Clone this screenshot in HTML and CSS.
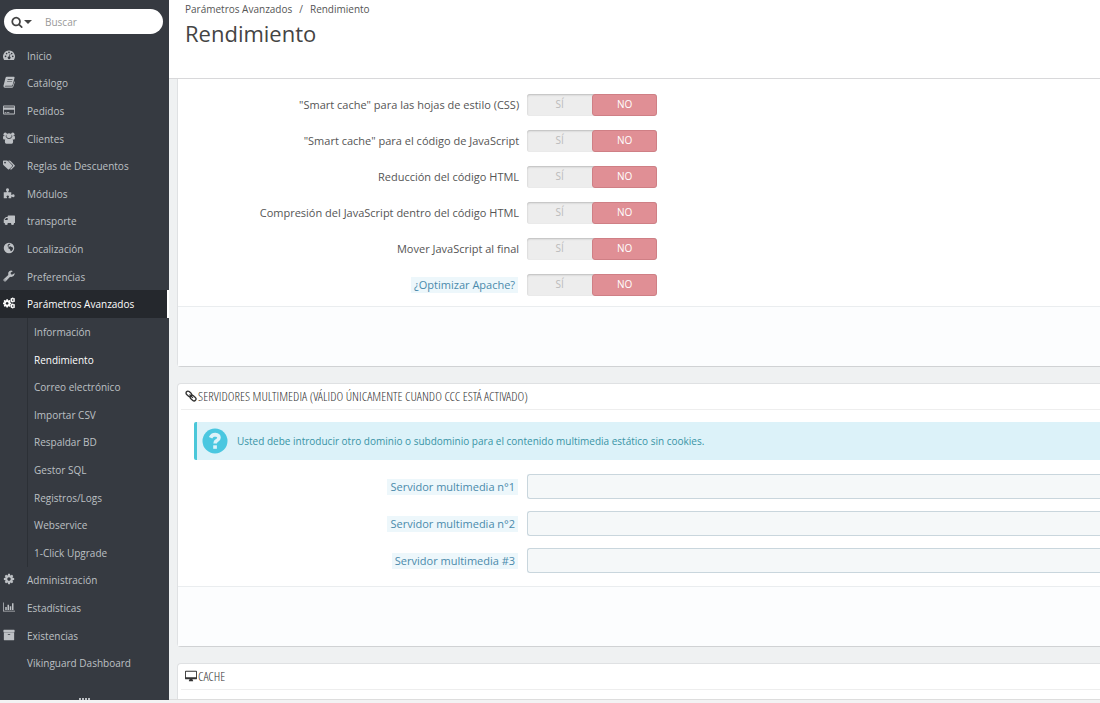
FILE: index.html
```
<!DOCTYPE html>
<html lang="es">

<head>
    <meta charset="utf-8">
    <title>Rendimiento</title>
    <link rel="stylesheet" href="styles.css">
</head>

<body>
    <svg class="sprite" aria-hidden="true">
        <symbol id="i-search" viewBox="0 0 1792 1792"><path d="M1216 832q0-185-131.5-316.5t-316.5-131.5-316.5 131.5-131.5 316.5 131.5 316.5 316.5 131.5 316.5-131.5 131.5-316.5zm512 832q0 52-38 90t-90 38q-54 0-90-38l-343-342q-179 124-399 124-143 0-273.5-55.5t-225-150-150-225-55.5-273.5 55.5-273.5 150-225 225-150 273.5-55.5 273.5 55.5 225 150 150 225 55.5 273.5q0 220-124 399l343 343q37 37 37 90z"/></symbol>
        <symbol id="i-dashboard" viewBox="0 0 16 16"><path fill-rule="evenodd" d="M8 2a8 8 0 0 0-6.7 12.3q.2.3.6.3h12.2q.4 0 .6-.3A8 8 0 0 0 8 2zM3.4 8.8a1.1 1.1 0 1 1 0 2.2 1.1 1.1 0 0 1 0-2.2zM4.8 5a1.1 1.1 0 1 1 0 2.2 1.1 1.1 0 0 1 0-2.2zM8 3.4a1.1 1.1 0 1 1 0 2.2 1.1 1.1 0 0 1 0-2.2zM11.6 5a1.1 1.1 0 1 1 0 2.2 1.1 1.1 0 0 1 0-2.2zM13 8.8a1.1 1.1 0 1 1 0 2.2 1.1 1.1 0 0 1 0-2.2zM9 6.4l1 .3-1 3.4a1.8 1.8 0 1 1-1-.2z"/></symbol>
        <symbol id="i-book" viewBox="0 0 16 16"><path fill-rule="evenodd" d="M5 1h9.5q1.200.2.9 1.400L12.800 12q-.3 1-1.400 1H3.200q-.9 0-.9.6.1.5.9.5h9q.7 0 .9-.7l2-6.500q.9.500.6 1.500l-2 6q-.4 1.400-1.800 1.400H3Q.8 15.600.6 13.500q0-.8.3-1.500L3.400 2.400Q3.900 1 5 1zM6.300 4l-.3.9h6.500l.3-.9zM5.600 6.500l-.3.9h6.500l.3-.9z"/></symbol>
        <symbol id="i-card" viewBox="0 0 16 16"><path fill-rule="evenodd" d="M1.300 2h13.400Q16 2 16 3.300v9.400q0 1.300-1.300 1.300H1.300Q0 14 0 12.700V3.300Q0 2 1.300 2zM1.100 3.200v1.600h13.800V3.200zM1.100 7.800v5h13.800v-5zM2.200 10.800h2.200v1H2.200zM5.200 10.800h3.300v1H5.200z"/></symbol>
        <symbol id="i-group" viewBox="0 0 16 16"><circle cx="3" cy="3" r="2.300"/><circle cx="13" cy="3" r="2.300"/><circle cx="8" cy="5" r="3.200"/><path d="M.9 5q2 1 3.700.2Q4.200 8 5.200 8.500 3.500 8.700 3 10H1.500Q0 10 0 8q0-2.300.9-3zM15.100 5q-2 1-3.700.2.4 2.800-.6 3.300 1.700.2 2.200 1.500h1.500Q16 10 16 8q0-2.300-.9-3zM5.200 8.300q2.800 1.900 5.600 0Q13.500 8.500 13.500 13q0 2.500-2 2.500h-7q-2 0-2-2.500 0-4.500 2.700-4.700z"/></symbol>
        <symbol id="i-tags" viewBox="0 0 16 16"><path fill-rule="evenodd" d="M0 2.800Q0 2 .8 2h4.300q.9 0 1.700.7l5.400 5.500q.8.800 0 1.600l-4 4q-.8.700-1.600 0L.8 8.200Q0 7.500 0 6.600zM2.700 3.500a1.200 1.200 0 1 0 0 2.400 1.200 1.200 0 0 0 0-2.400z"/><path d="M7 2h1.400q.9 0 1.700.7l5.400 5.500q.8.800 0 1.600l-4 4q-.9.800-1.700 0l-.4-.4 3.700-3.700q.8-.9 0-1.700z"/></symbol>
        <symbol id="i-puzzle" viewBox="0 0 16 16"><path d="M1 7h3.500Q5.200 7 5 6 3.600 4.700 4 3.200 4.500 1.800 6 1.800t2 1.400Q8.400 4.700 7 6q-.2 1 .6 1H11v3q0 .8.800.6.8-1.200 2.200-1 1.500.4 1.500 2t-1.500 2q-1.400.2-2.200-1-.8-.2-.8.600V15H7.600q-.6-.4-.2-1.200.8-.8.500-1.600-.4-1-1.600-1t-1.600 1q-.3.8.500 1.600.4.800-.2 1.200H1z"/></symbol>
        <symbol id="i-truck" viewBox="0 0 16 16"><path fill-rule="evenodd" d="M7 2h8.300q.7 0 .7.700v9.300h-1.400a2 2 0 1 1-3.800 0H6.200a2 2 0 1 1-3.800 0H1V7.400q0-.5.4-.9L3.600 4.300Q4 4 4.500 4h1.700V2.700Q6.200 2 7 2zM4.500 5.200L2.200 7.500v.6h4V5.200z"/></symbol>
        <symbol id="i-globe" viewBox="0 0 16 16"><path fill-rule="evenodd" d="M8 1a7 7 0 1 0 0 14A7 7 0 0 0 8 1zM8 2.300l1.800.3q-.4 1-1.600 1.400L7 5.200l1.500 1 1.500-.7 1.500 1.200 2 .8q0 2.500-2 4.500l-1.300.4-.7-2.400L7.800 8.500 6.500 8 8 6.800 6 5.800 6.500 3.500z"/></symbol>
        <symbol id="i-wrench" viewBox="0 0 16 16"><path fill-rule="evenodd" d="M15.300 4.300q.5.300.3 1Q14.800 9 11.200 9.200q-.9 0-1.700-.3L3.700 15q-1 .9-2 0l-.8-.8q-.9-1 0-2L7 6.500q-.8-3 1.300-4.800 2.200-1.600 4.300-.5.500.3 0 .7L10.300 3.300v2L12 6.300zM2.600 12.500a.7.7 0 1 0 0 1.400.7.7 0 0 0 0-1.400z"/></symbol>
        <symbol id="i-cog" viewBox="0 0 1792 1792"><path d="M1152 896q0-106-75-181t-181-75-181 75-75 181 75 181 181 75 181-75 75-181zm512-109v222q0 12-8 23t-20 13l-185 28q-19 54-39 91 35 50 107 138 10 12 10 25t-9 23q-27 37-99 108t-94 71q-12 0-26-9l-138-108q-44 23-91 38-16 136-29 186-7 28-36 28h-222q-14 0-24.500-8.500t-11.500-21.500l-28-184q-49-16-90-37l-141 107q-10 9-25 9-14 0-25-11-126-114-165-168-7-10-7-23 0-12 8-23 15-21 51-66.500t54-70.500q-27-50-41-99l-183-27q-13-2-21-12.500t-8-23.500v-222q0-12 8-23t19-13l186-28q14-46 39-92-40-57-107-138-10-12-10-24 0-10 9-23 26-36 98.500-107.500t94.500-71.500q13 0 26 10l138 107q44-23 91-38 16-136 29-186 7-28 36-28h222q14 0 24.500 8.500t11.500 21.500l28 184q49 16 90 37l142-107q9-9 24-9 13 0 25 10 129 119 165 170 7 8 7 22 0 12-8 23-15 21-51 66.500t-54 70.500q26 50 41 98l183 28q13 2 21 12.500t8 23.500z"/></symbol>
        <symbol id="i-cogs" viewBox="0 0 16 16"><use href="#i-cog" x="-1" y="2" width="13" height="13"/><use href="#i-cog" x="9" y="0" width="8" height="8"/><use href="#i-cog" x="9" y="8" width="8" height="8"/></symbol>
        <symbol id="i-chart" viewBox="0 0 16 16"><path d="M0 2h1v11h15v1H0zM3 8h2v4H3zM6 5h2v7H6zM9 7h2v5H9zM12 3h2v9h-2z"/></symbol>
        <symbol id="i-archive" viewBox="0 0 1792 1792"><path d="M1088 832q0-26-19-45t-45-19h-256q-26 0-45 19t-19 45 19 45 45 19h256q26 0 45-19t19-45zm576-192v960q0 26-19 45t-45 19h-1408q-26 0-45-19t-19-45v-960q0-26 19-45t45-19h1408q26 0 45 19t19 45zm64-448v256q0 26-19 45t-45 19h-1536q-26 0-45-19t-19-45v-256q0-26 19-45t45-19h1536q26 0 45 19t19 45z"/></symbol>
        <symbol id="i-link" viewBox="0 0 16 16"><g fill="none" stroke="currentColor" stroke-width="1.800"><rect x="1" y="2.500" width="8.500" height="5" rx="2.500" transform="rotate(42 5 5)"/><rect x="6.500" y="8.500" width="8.500" height="5" rx="2.500" transform="rotate(42 11 11)"/><path d="M6 6l4.500 4.500"/></g></symbol>
        <symbol id="i-desktop" viewBox="0 0 16 16"><path fill-rule="evenodd" d="M1.200 1h13.600Q16 1 16 2.200v9q0 1.200-1.200 1.200H10q0 1.200.8 1.600v1H5.200v-1q.8-.4.8-1.600H1.200Q0 12.400 0 11.200v-9Q0 1 1.200 1zM1.200 2.200v7.400h13.600V2.200z"/></symbol>
        <symbol id="i-question" viewBox="0 0 26 26"><circle cx="13" cy="13" r="12.500"/><path fill="none" stroke="#dcf2f9" stroke-width="3.600" d="M8.600 9.800q1.300-3.200 4.600-3.200 3.800.2 3.800 3.200 0 1.700-2.200 2.900-1.700.9-1.700 2.900"/><path fill="#dcf2f9" d="M11.200 17.300h3.700v3.500h-3.700z"/></symbol>
    </svg>

    <div class="page">
        <aside class="sidebar">
            <form class="search">
                <button type="button" aria-label="Buscar en"><svg class="icon"><use href="#i-search"/></svg><span class="caret"></span></button>
                <input type="text" placeholder="Buscar" aria-label="Buscar">
            </form>
            <nav class="menu">
                <a href="#"><svg class="icon"><use href="#i-dashboard"/></svg>Inicio</a>
                <a href="#"><svg class="icon"><use href="#i-book"/></svg>Catálogo</a>
                <a href="#"><svg class="icon"><use href="#i-card"/></svg>Pedidos</a>
                <a href="#"><svg class="icon"><use href="#i-group"/></svg>Clientes</a>
                <a href="#"><svg class="icon"><use href="#i-tags"/></svg>Reglas de Descuentos</a>
                <a href="#"><svg class="icon"><use href="#i-puzzle"/></svg>Módulos</a>
                <a href="#"><svg class="icon"><use href="#i-truck"/></svg>transporte</a>
                <a href="#"><svg class="icon"><use href="#i-globe"/></svg>Localización</a>
                <a href="#"><svg class="icon"><use href="#i-wrench"/></svg>Preferencias</a>
                <a href="#" class="active"><svg class="icon"><use href="#i-cogs"/></svg>Parámetros Avanzados</a>
                <div class="submenu">
                    <a href="#">Información</a>
                    <a href="#" class="current">Rendimiento</a>
                    <a href="#">Correo electrónico</a>
                    <a href="#">Importar CSV</a>
                    <a href="#">Respaldar BD</a>
                    <a href="#">Gestor SQL</a>
                    <a href="#">Registros/Logs</a>
                    <a href="#">Webservice</a>
                    <a href="#">1-Click Upgrade</a>
                </div>
                <a href="#"><svg class="icon"><use href="#i-cog"/></svg>Administración</a>
                <a href="#"><svg class="icon"><use href="#i-chart"/></svg>Estadísticas</a>
                <a href="#"><svg class="icon"><use href="#i-archive"/></svg>Existencias</a>
                <a href="#"><span class="icon"></span>Vikinguard Dashboard</a>
            </nav>
            <div class="grip"><i></i><i></i><i></i><i></i></div>
        </aside>

        <main class="content">
            <header class="page-head">
                <div class="breadcrumb"><a href="#">Parámetros Avanzados</a><span>/</span><a href="#">Rendimiento</a></div>
                <h1>Rendimiento</h1>
            </header>

            <section class="panel panel-first">
                <div class="rows">
                    <div class="row" role="radiogroup" aria-labelledby="l1">
                        <span class="label" id="l1">"Smart cache" para las hojas de estilo (CSS)</span>
                        <div class="switch">
                            <input type="radio" name="css" id="css_on"><label for="css_on">SÍ</label>
                            <input type="radio" name="css" id="css_off" checked><label for="css_off">NO</label>
                        </div>
                    </div>
                    <div class="row" role="radiogroup" aria-labelledby="l2">
                        <span class="label" id="l2">"Smart cache" para el código de JavaScript</span>
                        <div class="switch">
                            <input type="radio" name="js" id="js_on"><label for="js_on">SÍ</label>
                            <input type="radio" name="js" id="js_off" checked><label for="js_off">NO</label>
                        </div>
                    </div>
                    <div class="row" role="radiogroup" aria-labelledby="l3">
                        <span class="label" id="l3">Reducción del código HTML</span>
                        <div class="switch">
                            <input type="radio" name="html" id="html_on"><label for="html_on">SÍ</label>
                            <input type="radio" name="html" id="html_off" checked><label for="html_off">NO</label>
                        </div>
                    </div>
                    <div class="row" role="radiogroup" aria-labelledby="l4">
                        <span class="label" id="l4">Compresión del JavaScript dentro del código HTML</span>
                        <div class="switch">
                            <input type="radio" name="inline" id="inline_on"><label for="inline_on">SÍ</label>
                            <input type="radio" name="inline" id="inline_off" checked><label for="inline_off">NO</label>
                        </div>
                    </div>
                    <div class="row" role="radiogroup" aria-labelledby="l5">
                        <span class="label" id="l5">Mover JavaScript al final</span>
                        <div class="switch">
                            <input type="radio" name="defer" id="defer_on"><label for="defer_on">SÍ</label>
                            <input type="radio" name="defer" id="defer_off" checked><label for="defer_off">NO</label>
                        </div>
                    </div>
                    <div class="row" role="radiogroup" aria-labelledby="l6">
                        <span class="label help" id="l6">¿Optimizar Apache?</span>
                        <div class="switch">
                            <input type="radio" name="apache" id="apache_on"><label for="apache_on">SÍ</label>
                            <input type="radio" name="apache" id="apache_off" checked><label for="apache_off">NO</label>
                        </div>
                    </div>
                </div>
                <div class="panel-footer"></div>
            </section>

            <section class="panel">
                <h2><svg class="icon"><use href="#i-link"/></svg>SERVIDORES MULTIMEDIA (VÁLIDO ÚNICAMENTE CUANDO CCC ESTÁ ACTIVADO)</h2>
                <div class="alert"><svg><use href="#i-question"/></svg>Usted debe introducir otro dominio o subdominio para el contenido multimedia estático sin cookies.</div>
                <div class="rows rows-text">
                    <div class="row">
                        <label class="label help" for="server1">Servidor multimedia n°1</label>
                        <input type="text" id="server1">
                    </div>
                    <div class="row">
                        <label class="label help" for="server2">Servidor multimedia n°2</label>
                        <input type="text" id="server2">
                    </div>
                    <div class="row">
                        <label class="label help" for="server3">Servidor multimedia #3</label>
                        <input type="text" id="server3">
                    </div>
                </div>
                <div class="panel-footer"></div>
            </section>

            <section class="panel panel-last">
                <h2><svg class="icon"><use href="#i-desktop"/></svg>CACHE</h2>
            </section>
        </main>
    </div>
</body>

</html>
```
FILE: styles.css
```
* {
    box-sizing: border-box;
}

body {
    margin: 0;
    font-family: "Open Sans", sans-serif;
    font-size: 10px;
    line-height: 16px;
    color: #555;
    background: #f3f3f4;
}

a {
    color: inherit;
    text-decoration: none;
}

input,
button {
    font: inherit;
    color: inherit;
}

.sprite {
    position: absolute;
    width: 0;
    height: 0;
}

.icon {
    flex: none;
    width: 12px;
    height: 12px;
    fill: currentColor;
}

.page {
    display: flex;
    height: 100vh;
    padding-bottom: 3px;
}

/* sidebar */
.sidebar {
    display: flex;
    flex-direction: column;
    flex: none;
    width: 169px;
    padding-top: 9px;
    background: #363a41;
    color: #bdc0c4;
}

.search {
    display: flex;
    align-items: center;
    height: 25px;
    margin: 0 6px 8px 4px;
    background: #fff;
    border-radius: 13px;
}

.search button {
    display: flex;
    align-items: center;
    gap: 1px;
    padding: 0 0 0 7px;
    border: 0;
    background: none;
    color: #444;
}

.caret {
    border: 4px solid transparent;
    border-top-color: currentColor;
    border-bottom: 0;
}

.search input {
    flex: 1;
    min-width: 0;
    padding: 0 13px;
    border: 0;
    background: none;
}

.search input::placeholder {
    color: #999;
}

.menu,
.submenu {
    display: flex;
    flex-direction: column;
}

.menu {
    flex: 1;
}

.menu a {
    display: flex;
    flex: 1 0 0;
    align-items: center;
    gap: 12px;
    padding-left: 3px;
}

.menu .icon {
    margin-bottom: 2px;
}

.menu .active {
    background: #25282d;
    border-right: 2px solid #fff;
    color: #fff;
}

.submenu {
    flex: 9 0 0;
    margin-left: 27px;
    border-left: 1px solid #2c3036;
}

.submenu a {
    padding-left: 6px;
}

.submenu .current {
    color: #fff;
}

.grip {
    display: flex;
    justify-content: center;
    align-items: flex-end;
    gap: 1px;
    height: 23px;
}

.grip i {
    width: 2px;
    height: 2px;
    background: #bdc0c4;
}

/* content */
.content {
    flex: 1;
    display: flex;
    flex-direction: column;
    min-width: 0;
    overflow: hidden;
    background: #eff1f2;
    border-bottom: 1px solid #ddd;
}

.page-head {
    flex: none;
    height: 79px;
    padding: 1px 16px;
    background: #fff;
    border-bottom: 1px solid #d8d8da;
}

.breadcrumb {
    display: flex;
    gap: 7px;
}

h1 {
    margin: 1px 0;
    font-size: 22px;
    font-weight: 400;
    line-height: 30px;
    color: #444;
}

.panel {
    flex: none;
    margin: 0 0 16px 8px;
    background: #fff;
    border: 1px solid #dfe1e3;
    border-right: 0;
    border-bottom-color: #d0d2d4;
    border-radius: 4px 0 0 4px;
}

.panel-first {
    border-top: 0;
    border-top-left-radius: 0;
}

/* runs on below the fold */
.panel-last {
    min-height: 60px;
    margin-bottom: 0;
}

.panel h2 {
    display: flex;
    align-items: center;
    gap: 1px;
    height: 26px;
    margin: 0 0 0 3px;
    padding: 0 0 2px 4px;
    border-bottom: 1px solid #eee;
    font-family: "Open Sans Condensed Light", "Open Sans Condensed", "Roboto Condensed", sans-serif;
    font-size: 13px;
    font-weight: 300;
    color: #333;
}

.panel-footer {
    height: 60px;
    background: #fcfdfe;
    border-top: 1px solid #eaedef;
}

.rows {
    display: grid;
    gap: 14px;
    padding: 15px 0 10px;
}

.rows-text {
    gap: 12px;
    padding: 14px 0 13px;
}

.row {
    display: grid;
    grid-template-columns: 37% 1fr;
    align-items: center;
    column-gap: 8px;
    font-size: 11px;
}

.label {
    justify-self: end;
}

.help {
    margin-right: 1px;
    padding: 0 3px;
    background: #edf7fb;
    color: #4a8aab;
}

.row > input {
    width: 100%;
    height: 25px;
    padding: 0 8px;
    background: #f5f8f9;
    border: 1px solid #c9d6dd;
    border-right: 0;
    border-radius: 3px 0 0 3px;
}

.switch {
    position: relative;
    display: grid;
    grid-template-columns: 1fr 1fr;
    width: 130px;
    height: 22px;
    background: #ededed;
    border-radius: 3px;
    box-shadow: inset 0 1px 2px #bbb;
    color: #bbb;
    font-size: 10px;
    text-align: center;
    line-height: 21px;
}

.switch input {
    position: absolute;
    margin: 0;
    opacity: 0;
}

.switch input:checked + label {
    background: #e08f95;
    border: 1px solid #cf7f85;
    border-radius: 3px;
    color: #fff;
    line-height: 19px;
}

.alert {
    display: flex;
    align-items: center;
    gap: 9px;
    height: 38px;
    margin: 12px 0 0 16px;
    padding-left: 5px;
    background: #dcf2f9;
    border-left: 3px solid #4ac7d9;
    border-radius: 2px 0 0 2px;
    color: #3894a6;
}

.alert svg {
    width: 26px;
    height: 26px;
    fill: #4ac7e0;
}
```
